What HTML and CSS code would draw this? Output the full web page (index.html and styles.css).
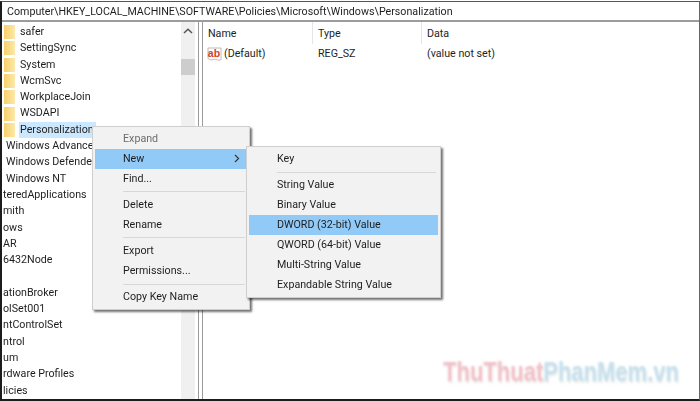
FILE: index.html
```html
<!DOCTYPE html>
<html lang="en">
<head>
<meta charset="utf-8">
<title>Registry Editor</title>
<link rel="stylesheet" href="styles.css">
</head>
<body>
<div class="window">
  <div class="address">Computer\HKEY_LOCAL_MACHINE\SOFTWARE\Policies\Microsoft\Windows\Personalization</div>
  <div class="panes">
    <div class="tree">
      <ul class="rows">
        <li class="row folder"><i class="fold"></i><span>safer</span></li>
        <li class="row folder"><i class="fold"></i><span>SettingSync</span></li>
        <li class="row folder"><i class="fold"></i><span>System</span></li>
        <li class="row folder"><i class="fold"></i><span>WcmSvc</span></li>
        <li class="row folder"><i class="fold"></i><span>WorkplaceJoin</span></li>
        <li class="row folder"><i class="fold"></i><span>WSDAPI</span></li>
        <li class="row folder"><i class="fold"></i><span class="selected">Personalization</span></li>
        <li class="row l2"><span>Windows Advanced</span></li>
        <li class="row l2"><span>Windows Defender</span></li>
        <li class="row l2"><span>Windows NT</span></li>
        <li class="row l1"><span>teredApplications</span></li>
        <li class="row l1"><span>mith</span></li>
        <li class="row l1"><span>ows</span></li>
        <li class="row l1"><span>AR</span></li>
        <li class="row l1"><span>6432Node</span></li>
        <li class="row l1"><span>&nbsp;</span></li>
        <li class="row l1"><span>ationBroker</span></li>
        <li class="row l1"><span>olSet001</span></li>
        <li class="row l1"><span>ntControlSet</span></li>
        <li class="row l1"><span>ntrol</span></li>
        <li class="row l1"><span>um</span></li>
        <li class="row l1"><span>rdware Profiles</span></li>
        <li class="row l1"><span>licies</span></li>
      </ul>
      <div class="scrollbar">
        <svg class="up" width="10" height="6" viewBox="0 0 10 6"><path d="M1 5L5 1.2L9 5" fill="none" stroke="#555" stroke-width="1.5"/></svg>
        <div class="thumb"></div>
      </div>
    </div>
    <div class="splitter"></div>
    <div class="list">
      <div class="list-head">
        <div class="c-name">Name</div>
        <div class="c-type">Type</div>
        <div class="c-data">Data</div>
      </div>
      <div class="list-row">
        <div class="c-name has-icon">
          <svg class="ab" width="15" height="15" viewBox="0 0 15 15"><path d="M1 1H14V12.5C11.5 14.5 9 11.5 6.5 12.5C4.5 13.3 3 12.8 1 11.5Z" fill="#fff" stroke="#b3a5a0" stroke-width="0.8"/><text x="0.8" y="10" class="ab-text">ab</text></svg>
          <span>(Default)</span>
        </div>
        <div class="c-type">REG_SZ</div>
        <div class="c-data">(value not set)</div>
      </div>
    </div>
  </div>
  <div class="menu ctx">
    <div class="item off">Expand</div>
    <div class="item hot">New<svg class="arrow" width="6" height="9" viewBox="0 0 6 9"><path d="M1 1L4.6 4.5L1 8" fill="none" stroke="#333" stroke-width="1.1"/></svg></div>
    <div class="item">Find...</div>
    <div class="sep"></div>
    <div class="item">Delete</div>
    <div class="item">Rename</div>
    <div class="sep"></div>
    <div class="item">Export</div>
    <div class="item">Permissions...</div>
    <div class="sep"></div>
    <div class="item">Copy Key Name</div>
  </div>
  <div class="menu sub">
    <div class="item">Key</div>
    <div class="sep"></div>
    <div class="item">String Value</div>
    <div class="item">Binary Value</div>
    <div class="item hot">DWORD (32-bit) Value</div>
    <div class="item">QWORD (64-bit) Value</div>
    <div class="item">Multi-String Value</div>
    <div class="item">Expandable String Value</div>
  </div>
  <div class="watermark"><span class="wm-red">ThuThuat</span><span class="wm-blue">PhanMem.vn</span></div>
</div>
</body>
</html>
```
FILE: styles.css
```css
* { box-sizing: border-box; }
html, body { margin: 0; padding: 0; background: #fff; }
body { width: 700px; height: 401px; overflow: hidden; padding-top: 1px; }
.window {
  position: relative;
  width: 700px;
  height: 400px;
  display: flex;
  flex-direction: column;
  overflow: hidden;
  border-top: 1px solid #555;
  border-left: 2px solid #1c1c1c;
  border-right: 1px solid #666;
  border-bottom: 2px solid #1c1c1c;
  font-family: Roboto, "Open Sans", sans-serif;
  font-size: 10.7px;
  color: #1e1e1e;
  filter: blur(0.3px);
}
.address {
  height: 20px;
  flex: none;
  padding: 2px 0 0 5px;
  line-height: 16px;
  border-bottom: 2px solid #9c9c9c;
  white-space: nowrap;
}
.panes { flex: 1; display: flex; min-height: 0; }
.tree { width: 195px; flex: none; display: flex; overflow: hidden; }
.rows {
  list-style: none;
  margin: 0;
  padding: 2px 0 0;
  width: 179px;
  flex: none;
  overflow: hidden;
}
.row { height: 16.3px; line-height: 16.3px; display: flex; align-items: center; white-space: nowrap; }
.row span { display: block; padding: 0 3px 0 1px; }
.folder { padding-left: 2px; }
.fold { width: 11px; height: 14px; flex: none; margin-right: 4px; background: linear-gradient(90deg, #f7d068, #fde9ac); }
.selected { background: #cce8ff; width: 77px; padding-right: 0; }
.l2 { padding-left: 3px; }
.l1 { padding-left: 0; }
.scrollbar { width: 14px; flex: none; background: #f0f0f0; display: flex; flex-direction: column; align-items: center; padding-top: 6px; }
.up { flex: none; }
.thumb { width: 14px; height: 16px; background: #cdcdcd; margin-top: 25px; flex: none; }
.splitter { width: 5px; flex: none; border-left: 1px solid #9a9a9a; border-right: 1px solid #9a9a9a; margin-left: 1px; }
.list { flex: 1; background: #fff; padding-left: 5px; }
.list-head { display: flex; height: 22px; line-height: 23px; }
.list-head .c-name, .list-head .c-type { border-right: 1px solid #e5e5e5; }
.list-row { display: flex; height: 16px; line-height: 16px; margin-top: 2px; }
.c-name { width: 105px; flex: none; }
.c-type { width: 109px; flex: none; padding-left: 5px; }
.c-data { flex: 1; padding-left: 5px; }
.has-icon { display: flex; align-items: center; gap: 2px; margin-left: -1px; width: 106px; }
.ab { flex: none; }
.ab-text { font-family: "Liberation Sans", sans-serif; font-size: 10.5px; font-weight: 700; fill: #d2402c; }
.menu {
  position: absolute;
  background: #f2f2f2;
  border: 1px solid #cfcfcf;
  box-shadow: 2px 2px 2px rgba(0,0,0,.55);
  padding: 2px;
}
.ctx { left: 90px; top: 124px; width: 158px; height: 184px; }
.sub { left: 244px; top: 144px; width: 195px; height: 152px; }
.item { height: 19.8px; line-height: 20px; padding-left: 28px; white-space: nowrap; position: relative; }
.sub .item { height: 20px; }
.off { color: #6d6d6d; }
.hot { background: #91c9f7; }
.sep { height: 1px; background: #d8d8d8; margin: 2.8px 2px 2.8px 28px; }
.sub .sep { margin: 2.5px 2px 2.5px 28px; }
.arrow { position: absolute; right: 7px; top: 5px; }
.watermark {
  position: absolute;
  left: 441px;
  top: 353px;
  font-family: "Liberation Sans", sans-serif;
  font-weight: 700;
  font-size: 27px;
  line-height: 34px;
  white-space: nowrap;
  transform: scaleX(.815);
  transform-origin: left center;
  filter: blur(1px);
  text-shadow: 1px 2px 2px rgba(120,120,120,.18);
}
.wm-red { color: #f3bfc6; }
.wm-blue { color: #c4e0ee; }
```
